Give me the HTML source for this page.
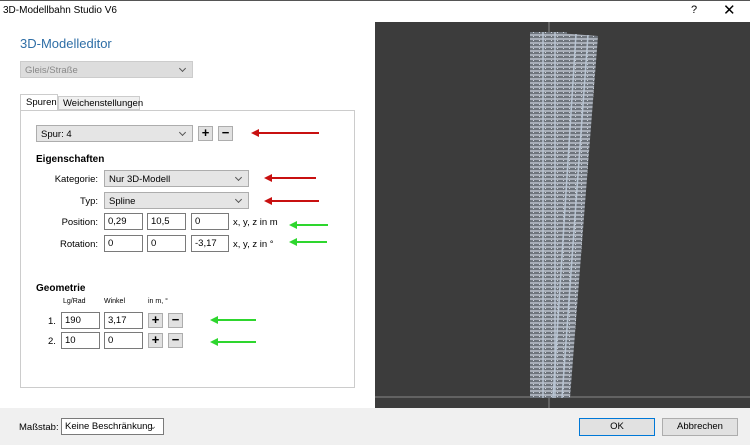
<!DOCTYPE html>
<html><head><meta charset="utf-8"><style>
body{margin:0;width:750px;height:445px;position:relative;background:#fff;font-family:"Liberation Sans",sans-serif;font-size:9.5px;color:#000;overflow:hidden}
.a{position:absolute}
.combo{position:absolute;background:#e5e5e5;border:1px solid #adadad;box-sizing:border-box;padding:3px 4px;font-size:9.5px}
.combo:after{content:"";position:absolute;right:7px;top:4px;width:4px;height:4px;border-right:1px solid #555;border-bottom:1px solid #555;transform:rotate(45deg)}
.inp{position:absolute;background:#fff;border:1px solid #7a7a7a;box-sizing:border-box;padding:2px 3px;font-size:9.5px;height:17px}
.btn{position:absolute;width:15px;height:15px;background:#e1e1e1;border:1px solid #adadad;box-sizing:border-box;text-align:center;font-weight:bold;font-size:13px;line-height:12px}
.lbl{position:absolute;text-align:right;font-size:9.5px}
.arr{position:absolute;height:2px}
.arr:before{content:"";position:absolute;left:-6px;top:-3px;border-right:8px solid;border-right-color:inherit;border-top:4px solid transparent;border-bottom:4px solid transparent}
.r{background:#c81010;border-color:#c81010}
.g{background:#2ed62e;border-color:#2ed62e}
</style></head><body>
<div class="a" style="left:0;top:0;width:750px;height:1px;background:#555"></div>
<div class="a" style="left:3px;top:5px;font-size:10px">3D-Modellbahn Studio V6</div>
<div class="a" style="left:691px;top:4px;font-size:11px">?</div>
<div class="a" style="left:723px;top:1px;font-size:15px">✕</div>
<div class="a" style="left:20px;top:36px;font-size:13px;color:#2e6ea6">3D-Modelleditor</div>
<div class="combo" style="left:20px;top:61px;width:173px;height:17px;color:#888;background:#ddd;border-color:#ccc">Gleis/Straße</div>
<div class="a" style="left:20px;top:94px;width:38px;height:17px;background:#fff;border:1px solid #ccc;border-bottom:none;padding:2px 5px;box-sizing:border-box">Spuren</div>
<div class="a" style="left:58px;top:96px;width:82px;height:14px;background:#f0f0f0;border:1px solid #ccc;padding:1px 4px;box-sizing:border-box">Weichenstellungen</div>
<div class="a" style="left:20px;top:110px;width:335px;height:278px;border:1px solid #ccc;box-sizing:border-box"></div>
<div class="combo" style="left:36px;top:125px;width:157px;height:17px">Spur: 4</div>
<div class="btn" style="left:198px;top:126px">+</div><div class="btn" style="left:218px;top:126px">−</div>
<div class="arr r" style="left:257px;top:132px;width:62px"></div>
<div class="a" style="left:36px;top:154px;font-weight:bold;font-size:10px">Eigenschaften</div>
<div class="lbl" style="left:40px;top:174px;width:58px">Kategorie:</div>
<div class="combo" style="left:104px;top:170px;width:145px;height:17px">Nur 3D-Modell</div>
<div class="arr r" style="left:270px;top:177px;width:46px"></div>
<div class="lbl" style="left:40px;top:196px;width:58px">Typ:</div>
<div class="combo" style="left:104px;top:192px;width:145px;height:17px">Spline</div>
<div class="arr r" style="left:270px;top:200px;width:49px"></div>
<div class="lbl" style="left:40px;top:217px;width:58px">Position:</div>
<div class="inp" style="left:104px;top:213px;width:39px">0,29</div>
<div class="inp" style="left:147px;top:213px;width:39px">10,5</div>
<div class="inp" style="left:191px;top:213px;width:38px">0</div>
<div class="a" style="left:233px;top:217px">x, y, z in m</div>
<div class="arr g" style="left:295px;top:224px;width:33px"></div>
<div class="lbl" style="left:40px;top:239px;width:58px">Rotation:</div>
<div class="inp" style="left:104px;top:235px;width:39px">0</div>
<div class="inp" style="left:147px;top:235px;width:39px">0</div>
<div class="inp" style="left:191px;top:235px;width:38px">-3,17</div>
<div class="a" style="left:233px;top:239px">x, y, z in °</div>
<div class="arr g" style="left:295px;top:241px;width:32px"></div>
<div class="a" style="left:36px;top:283px;font-weight:bold;font-size:10px">Geometrie</div>
<div class="a" style="left:63px;top:298px;font-size:7px">Lg/Rad</div>
<div class="a" style="left:104px;top:298px;font-size:7px">Winkel</div>
<div class="a" style="left:148px;top:298px;font-size:7px">in m, °</div>
<div class="a" style="left:48px;top:316px">1.</div>
<div class="inp" style="left:61px;top:312px;width:39px">190</div>
<div class="inp" style="left:104px;top:312px;width:39px">3,17</div>
<div class="btn" style="left:148px;top:313px">+</div><div class="btn" style="left:168px;top:313px">−</div>
<div class="arr g" style="left:216px;top:319px;width:40px"></div>
<div class="a" style="left:48px;top:336px">2.</div>
<div class="inp" style="left:61px;top:332px;width:39px">10</div>
<div class="inp" style="left:104px;top:332px;width:39px">0</div>
<div class="btn" style="left:148px;top:333px">+</div><div class="btn" style="left:168px;top:333px">−</div>
<div class="arr g" style="left:216px;top:341px;width:40px"></div>
<div class="a" style="left:0;top:408px;width:750px;height:37px;background:#f0f0f0"></div>
<div class="a" style="left:19px;top:422px">Maßstab:</div>
<div class="inp" style="left:61px;top:418px;width:103px;height:17px">Keine Beschränkung <span style="position:absolute;right:6px;color:#555">⌄</span></div>
<div class="a" style="left:579px;top:418px;width:76px;height:18px;background:#e1e1e1;border:1px solid #0078d7;box-sizing:border-box;text-align:center;line-height:16px">OK</div>
<div class="a" style="left:662px;top:418px;width:76px;height:18px;background:#e1e1e1;border:1px solid #adadad;box-sizing:border-box;text-align:center;line-height:16px">Abbrechen</div>
<svg class="a" style="left:375px;top:22px" width="375" height="386">
<defs>
<pattern id="ties" width="6" height="4" patternUnits="userSpaceOnUse">
<rect width="6" height="4" fill="#6e747c"/>
<rect y="0" width="6" height="2" fill="#a8aeb8"/>
<rect x="2" y="2" width="1" height="1" fill="#d0d6de"/>
</pattern>
</defs>
<rect width="375" height="386" fill="#3c3c3c"/>
<line x1="174" y1="0" x2="174" y2="386" stroke="#888" stroke-width="1"/>
<line x1="0" y1="375" x2="375" y2="375" stroke="#888" stroke-width="1"/>
<polygon points="183,11 223,14 195,376 170,376" fill="url(#ties)"/>
<rect x="155" y="10" width="37" height="366" fill="url(#ties)"/>
<line x1="168" y1="10" x2="168" y2="376" stroke="#b8c4d2" stroke-width="1.5"/>
<line x1="180" y1="10" x2="180" y2="376" stroke="#b8c4d2" stroke-width="1.5"/>
<line x1="201" y1="12" x2="178" y2="376" stroke="#b8c4d2" stroke-width="1.5"/>
<line x1="213" y1="13" x2="187" y2="376" stroke="#b8c4d2" stroke-width="1.5"/>
</svg>
</body></html>
